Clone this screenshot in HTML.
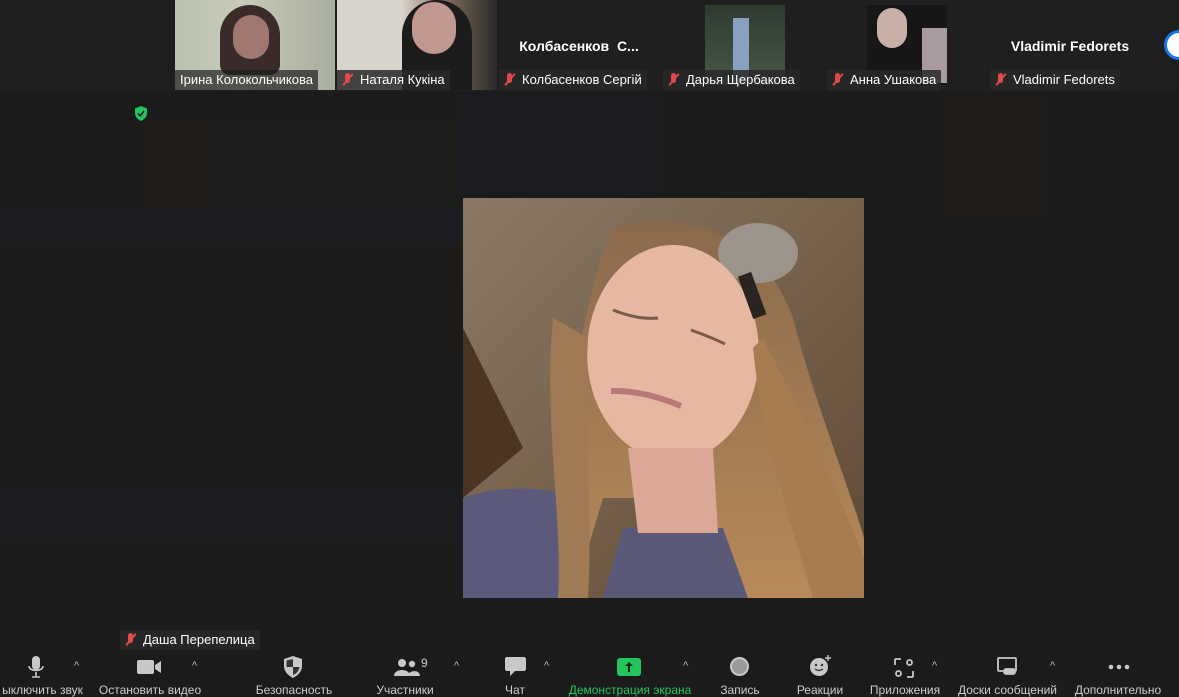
<!DOCTYPE html>
<html><head><meta charset="utf-8"><style>
*{margin:0;padding:0;box-sizing:border-box}
body{width:1179px;height:695px;overflow:hidden;background:#1b1b1b;font-family:"Liberation Sans","DejaVu Sans",sans-serif;position:relative;color:#fff}
.abs{position:absolute}
.strip{left:0;top:0;width:1179px;height:92px;background:#1e1e1e}
.tile{position:absolute;top:0;width:160px;height:90px;background:#1f1f1f}
.lbl{position:absolute;bottom:0;left:0;height:20px;background:rgba(40,40,40,.85);font-size:13px;line-height:20px;padding:0 5px;white-space:nowrap;color:#fff}
.mic{display:inline-block;width:12px;height:12px;position:relative;vertical-align:-1px;margin-right:6px}
.mic:before{content:"";position:absolute;left:3px;top:0;width:5px;height:10px;border-radius:3px;background:#e04a4a}
.mic:after{content:"";position:absolute;left:5px;top:-1px;width:2px;height:15px;background:#e04a4a;transform:rotate(40deg)}
.big{position:absolute;top:38px;width:100%;text-align:center;font-weight:bold;font-size:14px}
.tb{position:absolute;top:652px;height:43px;text-align:center;font-size:12px;color:#ccc}
.tb span{position:absolute;top:31px;left:50%;transform:translateX(-50%);white-space:nowrap}
.car{position:absolute;top:660px;color:#bbb;font-size:11px}
</style></head><body>
<div class="abs" style="left:0;top:120px;width:150px;height:90px;background:#1d1a1e"></div>
<div class="abs" style="left:148px;top:120px;width:55px;height:90px;background:#1e1b18"></div>
<div class="abs" style="left:203px;top:120px;width:255px;height:90px;background:#1a1d1a"></div>
<div class="abs" style="left:458px;top:95px;width:200px;height:100px;background:#1a1c1f"></div>
<div class="abs" style="left:945px;top:95px;width:100px;height:120px;background:#1e1b19"></div>
<div class="abs" style="left:0;top:208px;width:463px;height:36px;background:#1a1c1f"></div>
<div class="abs" style="left:0;top:250px;width:463px;height:100px;background:#1d1b1a"></div>
<div class="abs" style="left:0;top:490px;width:463px;height:50px;background:#1a1c1f"></div>
<div class="abs" style="left:864px;top:250px;width:315px;height:350px;background:#1b1c1a"></div>

<div class="abs strip"></div>
<div class="tile" style="left:175px"><div class="abs" style="left:0;top:0;width:160px;height:90px;background:linear-gradient(90deg,#b9c2b0,#c8cbb8 40%,#a8ad9e)"></div><div class="abs" style="left:45px;top:5px;width:60px;height:70px;border-radius:30px 30px 10px 10px;background:#3a2a2a"></div><div class="abs" style="left:58px;top:15px;width:36px;height:44px;border-radius:18px;background:#a07870"></div><div class="lbl" style="background:rgba(30,30,30,.7)">Ірина Колокольчикова</div></div>
<div class="tile" style="left:337px"><div class="abs" style="left:0;top:0;width:160px;height:90px;background:linear-gradient(90deg,#d8d4cc 40%,#7a6a55 70%,#2a2a2a)"></div><div class="abs" style="left:65px;top:0;width:70px;height:90px;border-radius:35px 35px 0 0;background:#1b1b1b"></div><div class="abs" style="left:75px;top:2px;width:44px;height:52px;border-radius:22px;background:#c09890"></div><div class="lbl"><i class="mic"></i>Наталя Кукіна</div></div>
<div class="tile" style="left:499px"><div class="big">Колбасенков&nbsp; С...</div><div class="lbl"><i class="mic"></i>Колбасенков Сергій</div></div>
<div class="tile" style="left:663px"><div class="abs" style="left:42px;top:5px;width:80px;height:80px;background:linear-gradient(#2e3a30,#485848)"></div><div class="abs" style="left:70px;top:18px;width:16px;height:65px;background:#8aa0c0"></div><div class="lbl"><i class="mic"></i>Дарья Щербакова</div></div>
<div class="tile" style="left:827px"><div class="abs" style="left:40px;top:5px;width:80px;height:80px;background:#171515"></div><div class="abs" style="left:50px;top:8px;width:30px;height:40px;border-radius:15px;background:#c8b0a8"></div><div class="abs" style="left:95px;top:28px;width:25px;height:55px;background:#a89aa0"></div><div class="lbl"><i class="mic"></i>Анна Ушакова</div></div>
<div class="tile" style="left:990px"><div class="big">Vladimir Fedorets</div><div class="lbl"><i class="mic"></i>Vladimir Fedorets</div></div>
<div class="abs" style="left:1164px;top:30px;width:30px;height:30px;border-radius:50%;background:#fff;border:3px solid #1a73e8"></div>

<svg class="abs" style="left:134px;top:106px" width="14" height="15" viewBox="0 0 14 15"><path d="M7 0 L13 2.5 V7 C13 11 10 13.5 7 15 C4 13.5 1 11 1 7 V2.5Z" fill="#22c55e"/><path d="M4 7.5 L6.2 9.8 L10 5" stroke="#123" stroke-width="1.6" fill="none"/></svg>

<svg class="abs" style="left:463px;top:198px" width="401" height="400" viewBox="0 0 401 400">
<defs><linearGradient id="bg" x1="0" y1="0" x2="1" y2="1"><stop offset="0" stop-color="#8a7866"/><stop offset=".5" stop-color="#76624c"/><stop offset="1" stop-color="#5c4834"/></linearGradient>
<linearGradient id="hr" x1="0" y1="0" x2="0" y2="1"><stop offset="0" stop-color="#8a6a4c"/><stop offset="1" stop-color="#b88a5a"/></linearGradient></defs>
<rect width="401" height="400" fill="url(#bg)"/>
<path d="M0 130 L60 250 L0 300Z" fill="#4a3424"/>
<path d="M150 30 C220 10 300 35 330 120 C350 200 390 300 401 340 V400 H260 L250 300 L140 300 L110 400 H95 C105 300 100 150 150 30Z" fill="url(#hr)"/>
<ellipse cx="295" cy="55" rx="40" ry="30" fill="#9c948a"/>
<path d="M0 300 C40 285 90 290 110 300 L120 400 H0Z" fill="#5b5a7a"/>
<path d="M160 330 L260 330 L285 400 H140Z" fill="#5a5a78"/>
<ellipse cx="210" cy="155" rx="86" ry="108" fill="#e6b8a2"/>
<path d="M165 250 L250 250 L255 335 L175 335Z" fill="#dca896"/>
<path d="M150 112 Q175 122 195 120" stroke="#7a5a4a" stroke-width="3" fill="none"/>
<path d="M228 132 Q250 140 262 146" stroke="#7a5a4a" stroke-width="3" fill="none"/>
<path d="M148 193 Q180 192 218 208" stroke="#b87878" stroke-width="6" fill="none"/>
<path d="M90 120 C80 220 100 320 95 400 H125 C130 320 120 220 125 140Z" fill="#a07a54"/>
<path d="M290 150 C300 250 330 330 350 400 H401 V360 C370 280 330 200 300 140Z" fill="#a67c50"/>
<rect x="282" y="75" width="14" height="45" fill="#2a2420" transform="rotate(-20 289 97)"/>
</svg>

<div class="abs" style="left:120px;top:630px;height:20px;background:rgba(40,40,40,.9);font-size:13px;line-height:20px;padding:0 5px"><i class="mic"></i>Даша Перепелица</div>

<svg class="abs" style="left:28px;top:656px" width="16" height="24" viewBox="0 0 16 24"><rect x="4" y="0" width="8" height="14" rx="4" fill="#c8c8c8"/><path d="M1 10 C1 16 15 16 15 10" stroke="#c8c8c8" stroke-width="1.6" fill="none"/><path d="M8 16 V21 M4 21 H12" stroke="#c8c8c8" stroke-width="1.6"/></svg>
<div class="tb" style="left:0;width:85px"><span>ыключить звук</span></div>
<div class="car" style="left:74px">^</div>
<svg class="abs" style="left:137px;top:660px" width="24" height="14" viewBox="0 0 24 14"><rect width="17" height="14" rx="2" fill="#c8c8c8"/><path d="M18 5 L24 1 V13 L18 9Z" fill="#c8c8c8"/></svg>
<div class="tb" style="left:95px;width:110px"><span>Остановить видео</span></div>
<div class="car" style="left:192px">^</div>
<svg class="abs" style="left:284px;top:656px" width="18" height="22" viewBox="0 0 18 22"><path d="M9 0 L18 3 V10 C18 16 13 20 9 22 C5 20 0 16 0 10 V3Z" fill="#c8c8c8"/><path d="M9 3 V11 H2.5 V4.5Z M9 11 H15.5 C15 15 12 18 9 19Z" fill="#333"/></svg>
<div class="tb" style="left:244px;width:100px"><span>Безопасность</span></div>
<svg class="abs" style="left:394px;top:658px" width="26" height="18" viewBox="0 0 26 18"><circle cx="8" cy="5" r="4" fill="#c8c8c8"/><circle cx="18" cy="6" r="3.2" fill="#c8c8c8"/><path d="M0 18 C0 10 16 10 16 18Z M14 18 C14 12 26 11 26 18Z" fill="#c8c8c8"/></svg>
<div class="abs" style="left:421px;top:656px;font-size:12px;color:#ccc">9</div>
<div class="tb" style="left:360px;width:90px"><span>Участники</span></div>
<div class="car" style="left:454px">^</div>
<svg class="abs" style="left:505px;top:657px" width="21" height="20" viewBox="0 0 21 20"><path d="M2 0 H19 Q21 0 21 2 V12 Q21 14 19 14 H10 L5 19 V14 H2 Q0 14 0 12 V2 Q0 0 2 0Z" fill="#c8c8c8"/></svg>
<div class="tb" style="left:495px;width:40px"><span>Чат</span></div>
<div class="car" style="left:544px">^</div>
<div class="abs" style="left:617px;top:658px;width:24px;height:18px;border-radius:3px;background:#22c55e"></div>
<svg class="abs" style="left:623px;top:661px" width="12" height="12" viewBox="0 0 12 12"><path d="M6 1 L10 5 H7 V11 H5 V5 H2Z" fill="#0a2a12"/></svg>
<div class="tb" style="left:565px;width:130px"><span style="color:#22c55e">Демонстрация экрана</span></div>
<div class="car" style="left:683px">^</div>
<div class="abs" style="left:730px;top:657px;width:19px;height:19px;border-radius:50%;border:2px solid #c8c8c8;background:#9a9a9a"></div>
<div class="tb" style="left:710px;width:60px"><span>Запись</span></div>
<svg class="abs" style="left:810px;top:655px" width="22" height="22" viewBox="0 0 22 22"><circle cx="9" cy="12" r="9" fill="#c8c8c8"/><circle cx="6" cy="10" r="1.2" fill="#333"/><circle cx="12" cy="10" r="1.2" fill="#333"/><path d="M5 14 Q9 17 13 14" stroke="#333" stroke-width="1.4" fill="none"/><path d="M18 0 V6 M15 3 H21" stroke="#c8c8c8" stroke-width="1.4"/></svg>
<div class="tb" style="left:785px;width:70px"><span>Реакции</span></div>
<svg class="abs" style="left:894px;top:658px" width="20" height="20" viewBox="0 0 20 20" fill="none" stroke="#c8c8c8" stroke-width="1.8"><path d="M1 7 V2 Q1 1 2 1 H7 M13 19 H18 Q19 19 19 18 V13"/><circle cx="15.5" cy="4.5" r="2.5"/><circle cx="4.5" cy="15.5" r="2.5"/></svg>
<div class="tb" style="left:865px;width:80px"><span>Приложения</span></div>
<div class="car" style="left:932px">^</div>
<svg class="abs" style="left:997px;top:657px" width="20" height="18" viewBox="0 0 20 18" fill="none" stroke="#c8c8c8" stroke-width="1.8"><path d="M6 14 H2 Q1 14 1 13 V2 Q1 1 2 1 H18 Q19 1 19 2 V13 Q19 14 18 14"/><rect x="7" y="12" width="11" height="5" rx="2" fill="#c8c8c8"/></svg>
<div class="tb" style="left:950px;width:115px"><span>Доски сообщений</span></div>
<div class="car" style="left:1050px">^</div>
<svg class="abs" style="left:1108px;top:664px" width="22" height="6" viewBox="0 0 22 6"><circle cx="3" cy="3" r="2.3" fill="#c8c8c8"/><circle cx="11" cy="3" r="2.3" fill="#c8c8c8"/><circle cx="19" cy="3" r="2.3" fill="#c8c8c8"/></svg>
<div class="tb" style="left:1070px;width:96px"><span>Дополнительно</span></div>
</body></html>
